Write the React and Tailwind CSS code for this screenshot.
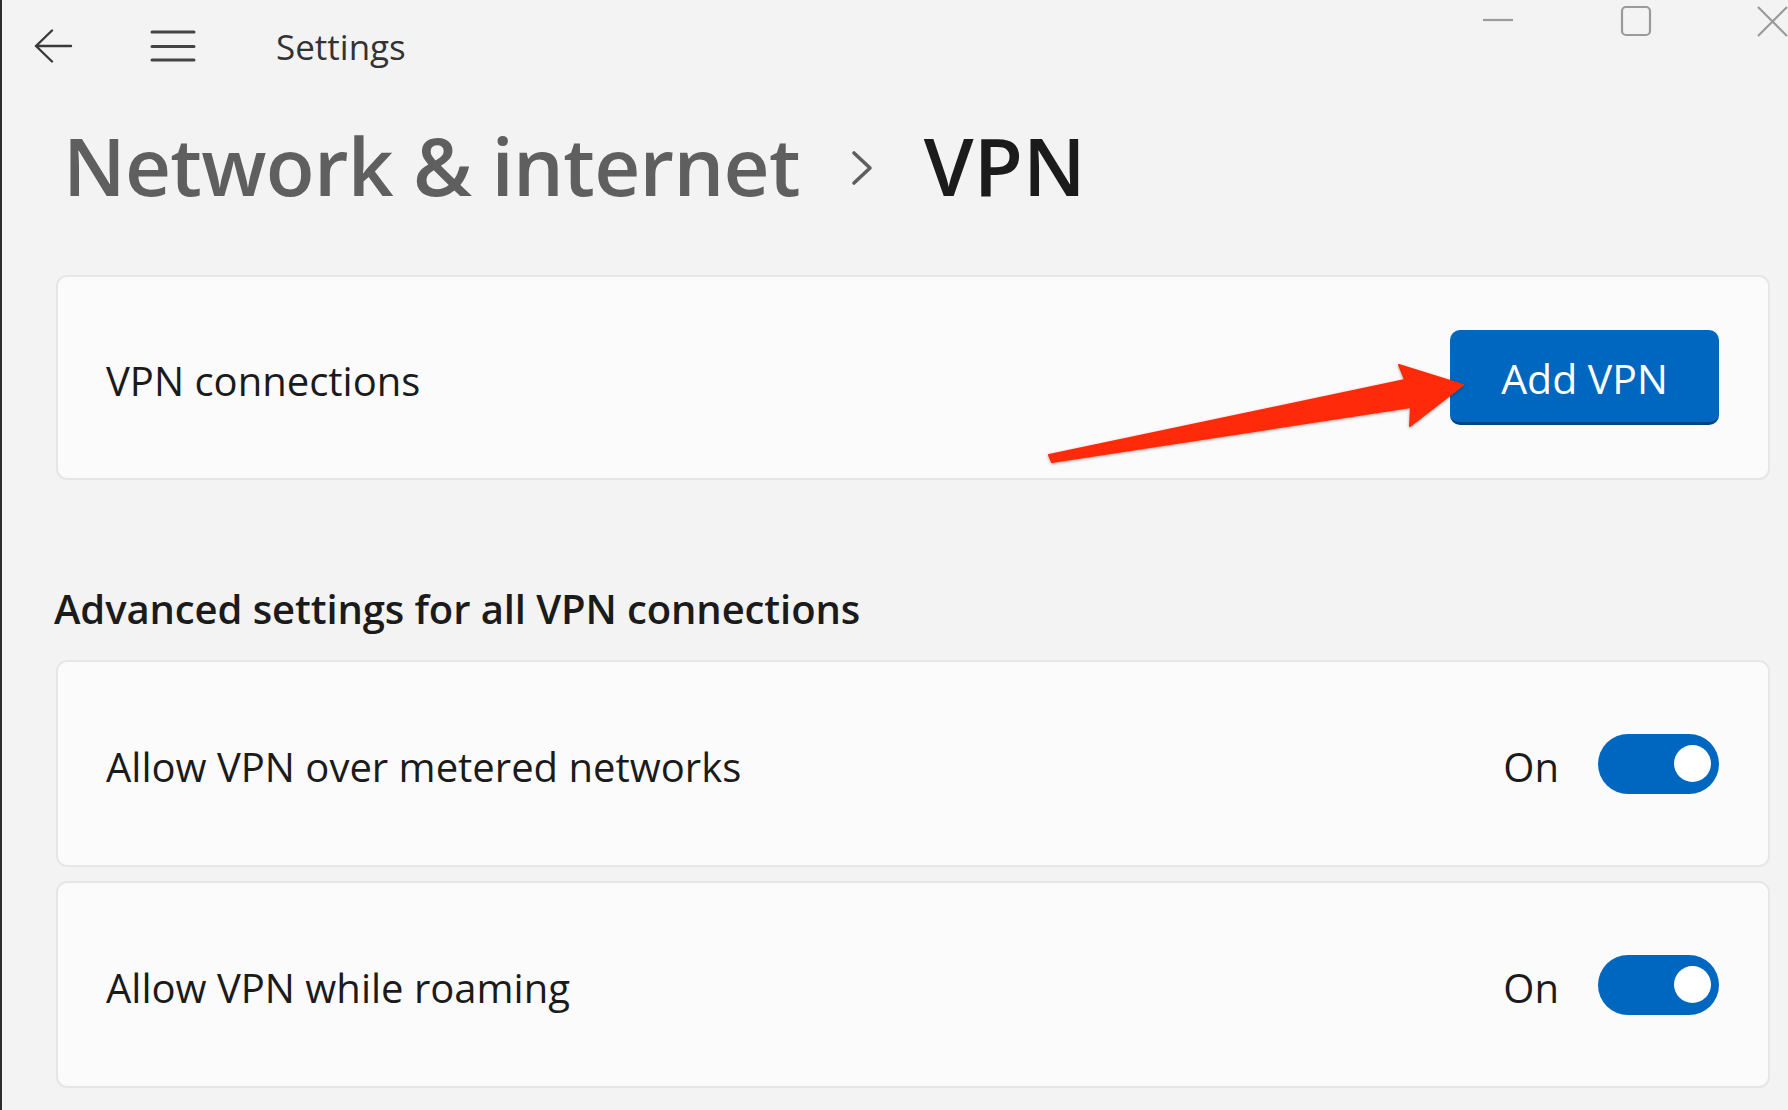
import React from "react";

function Toggle() {
  return (
    <div className="w-[121px] h-[60px] rounded-full bg-[#0067c0] flex items-center justify-end pr-[8px]">
      <div className="w-[37px] h-[37px] rounded-full bg-white" />
    </div>
  );
}

function SettingCard({ label, children, h }) {
  return (
    <div
      className={`${h} ml-[54px] mr-[18px] rounded-[11px] border-2 border-[#e6e6e6] bg-[#fbfbfb] flex items-center justify-between pl-[48px] pr-[49px]`}
    >
      <span className="text-[40px] leading-none text-[#1b1b1b] mt-[7px]">{label}</span>
      {children}
    </div>
  );
}

export default function App() {
  return (
    <div className="relative w-[1788px] h-[1110px] bg-[#f3f3f3] flex overflow-hidden font-['Open_Sans',sans-serif]">
      <div className="w-[2px] bg-[#2b2b2b] shrink-0" />
      <div className="flex-1 flex flex-col">
        {/* Title bar */}
        <div className="flex h-[92px]">
          <div className="flex items-center h-[92px]">
            <svg className="ml-[31px]" width="40" height="34" viewBox="0 0 40 34" fill="none" stroke="#3a3a3a" strokeWidth="2.4" strokeLinecap="round" strokeLinejoin="round">
              <path d="M3 17 H38 M19 1.5 L3 17 L19 32.5" />
            </svg>
            <svg className="ml-[77px]" width="46" height="32" viewBox="0 0 46 32" fill="none" stroke="#444" strokeWidth="3" strokeLinecap="round">
              <path d="M2 2 H44 M2 16.5 H44 M2 30 H44" />
            </svg>
            <span className="ml-[80px] text-[35px] leading-none text-[#333]">Settings</span>
          </div>
          <div className="ml-auto flex items-start pt-[5px]">
            <svg width="32" height="32" viewBox="0 0 32 32" fill="none" stroke="#9a9a9a" strokeWidth="2.2">
              <path d="M1 15 H31" />
            </svg>
            <svg className="ml-[106px]" width="32" height="32" viewBox="0 0 32 32" fill="none" stroke="#9a9a9a" strokeWidth="2.2">
              <rect x="2" y="2" width="28" height="28" rx="4" />
            </svg>
            <svg className="ml-[104px]" width="32" height="32" viewBox="0 0 32 32" fill="none" stroke="#9a9a9a" strokeWidth="2.2">
              <path d="M2 2 L31 31 M31 2 L2 31" />
            </svg>
          </div>
        </div>

        {/* Heading */}
        <div className="h-[183px] pt-[33px] pl-[61px] flex items-start">
          <h1 className="text-[80px] leading-[80px] font-semibold text-[#5f5f5f] tracking-[-0.7px]">Network &amp; internet</h1>
          <svg className="ml-[50px] mt-[25px]" width="24" height="36" viewBox="0 0 24 36" fill="none" stroke="#5f5f5f" strokeWidth="3.6" strokeLinecap="round" strokeLinejoin="round">
            <path d="M4 3 L20 18 L4 33" />
          </svg>
          <span className="ml-[50px] text-[80px] leading-[80px] font-semibold text-[#1b1b1b]">VPN</span>
        </div>

        {/* VPN connections card */}
        <SettingCard label="VPN connections" h="h-[205px]">
          <button className="w-[269px] h-[95px] rounded-[10px] bg-[#0067c0] border-b-[3px] border-[#00457f] text-white text-[41px] leading-none flex items-center justify-center pt-[5px]">
            Add VPN
          </button>
        </SettingCard>

        {/* Advanced heading */}
        <div className="pt-[102px] pl-[52px] h-[180px]">
          <h2 className="text-[40px] leading-[54px] font-semibold text-[#1b1b1b] tracking-[-0.1px]">Advanced settings for all VPN connections</h2>
        </div>

        <div className="flex flex-col gap-[14px]">
          <SettingCard label="Allow VPN over metered networks" h="h-[207px]">
            <div className="flex items-center gap-[39px]">
              <span className="text-[40px] leading-none text-[#1b1b1b] mt-[7px]">On</span>
              <Toggle />
            </div>
          </SettingCard>
          <SettingCard label="Allow VPN while roaming" h="h-[207px]">
            <div className="flex items-center gap-[39px]">
              <span className="text-[40px] leading-none text-[#1b1b1b] mt-[7px]">On</span>
              <Toggle />
            </div>
          </SettingCard>
        </div>
      </div>

      {/* Red annotation arrow */}
      <svg className="absolute inset-0 pointer-events-none drop-shadow-[0_1px_1.5px_rgba(0,0,0,0.35)]" width="1788" height="1110" viewBox="0 0 1788 1110">
        <polygon
          points="1049,455 1405,380 1399,365 1463,385 1410,426 1411,407 1052,462"
          fill="#fe2a0a"
          stroke="#fe2a0a"
          strokeWidth="2"
          strokeLinejoin="round"
        />
      </svg>
    </div>
  );
}
